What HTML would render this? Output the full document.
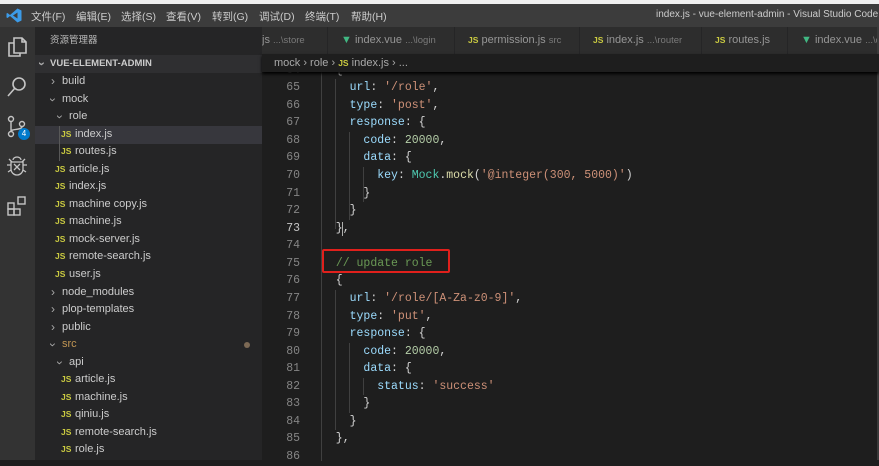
<!DOCTYPE html>
<html><head><meta charset="utf-8"><style>
*{margin:0;padding:0;box-sizing:border-box}
body{width:879px;height:460px;overflow:hidden;background:#1e1e1e;font-family:"Liberation Sans","Noto Sans CJK SC",sans-serif;position:relative}
.abs{position:absolute}
#top{left:0;top:0;width:879px;height:4px;background:#f0f0f0}
#title{left:0;top:4px;width:879px;height:23px;background:#3c3c3c;color:#cccccc;font-size:10.5px}
#title span{position:absolute;top:5px;white-space:nowrap}
#act{left:0;top:27px;width:35px;height:433px;background:#333333}
#side{left:35px;top:27px;width:227px;height:433px;background:#252526;color:#cccccc;font-size:11px}
.row{position:absolute;left:0;width:227px;height:17.5px;line-height:17.5px;white-space:nowrap}
.js{color:#cbcb41;font-weight:bold;font-size:8.5px;position:absolute}
.ch{position:absolute;color:#aaa;font-size:12px}
.dn{display:inline-block;transform:rotate(90deg)}
#tabs{left:262px;top:27px;width:617px;height:27px;background:#252526;font-size:11px;color:#969696}
.tab{position:absolute;top:0;height:27px;line-height:27px;background:#2d2d2d;border-right:1px solid #252526;white-space:nowrap;overflow:hidden}
.tab small{font-size:9.5px;color:#7a7a7a}
#bc{left:262px;top:54px;width:617px;height:18px;background:#1e1e1e;color:#a9a9a9;font-size:11px;line-height:18px;box-shadow:0 2px 3px #000;z-index:3}
.ln{position:absolute;left:262px;width:38px;text-align:right;color:#858585;font-family:"Liberation Mono",monospace;font-size:11.5px;line-height:17.57px}
.cd{position:absolute;left:322px;white-space:pre;color:#d4d4d4;font-family:"Liberation Mono",monospace;font-size:11.5px;line-height:17.57px}
.k{color:#9cdcfe}.s{color:#ce9178}.n{color:#b5cea8}.c{color:#6a9955}.t{color:#4ec9b0}.f{color:#dcdcaa}
.g{position:absolute;width:1px;background:#404040}
#code{position:absolute;left:0;top:1px;width:879px;height:460px}
</style></head><body>
<div class="abs" id="top"></div>
<div class="abs" id="title">
<svg class="abs" style="left:6px;top:4px" width="16" height="15" viewBox="0 0 16 15"><path d="M11.5 0.5L15.5 2.5V12.5L11.5 14.5L4 8L1.5 10L0.5 9.5V5.5L1.5 5L4 7L11.5 0.5ZM11.5 4.5L7 7.5L11.5 10.5Z" fill="#3c9be8" fill-rule="evenodd"/></svg>
<span style="left:31px">文件(F)</span><span style="left:76px">编辑(E)</span><span style="left:121px">选择(S)</span><span style="left:166px">查看(V)</span><span style="left:212px">转到(G)</span><span style="left:259px">调试(D)</span><span style="left:305px">终端(T)</span><span style="left:351px">帮助(H)</span>
<span style="left:656px;font-size:10px">index.js - vue-element-admin - Visual Studio Code</span>
</div>
<div class="abs" id="act">
<svg class="abs" style="left:6px;top:8px" width="22" height="24" viewBox="0 0 22 24" fill="none" stroke="#c5c5c5" stroke-width="1.6"><path d="M8 3h8l4 4v11H8z M16 3v4h4"/><path d="M8 8H3v13h11v-3"/></svg>
<svg class="abs" style="left:6px;top:49px" width="22" height="22" viewBox="0 0 22 22" fill="none" stroke="#c5c5c5" stroke-width="1.6"><circle cx="13" cy="8" r="6"/><path d="M9 12L2 20"/></svg>
<svg class="abs" style="left:6px;top:88px" width="24" height="24" viewBox="0 0 24 24" fill="none" stroke="#c5c5c5" stroke-width="1.4"><circle cx="5" cy="4" r="2.5"/><circle cx="5" cy="19" r="2.5"/><circle cx="16" cy="9" r="2.5"/><path d="M5 6.5v10M16 11.5c0 4-11 2-11 5"/></svg>
<div class="abs" style="left:18px;top:101px;width:12px;height:12px;border-radius:6px;background:#007acc;color:#fff;font-size:8px;text-align:center;line-height:12px">4</div>
<svg class="abs" style="left:6px;top:128px" width="22" height="22" viewBox="0 0 22 22" fill="none" stroke="#c5c5c5" stroke-width="1.3"><path d="M7 5a4 3 0 0 1 8 0"/><path d="M5 7h12v7a6 6 0 0 1-12 0z"/><path d="M8 9l6 6M14 9l-6 6M1 10h4M17 10h4M2 17l3-2M20 17l-3-2M3 4l3 3M19 4l-3 3"/></svg>
<svg class="abs" style="left:6px;top:168px" width="22" height="22" viewBox="0 0 22 22" fill="none" stroke="#c5c5c5" stroke-width="1.4"><rect x="2" y="8" width="6" height="6"/><rect x="2" y="14" width="6" height="6"/><rect x="8" y="14" width="6" height="6"/><rect x="12" y="2" width="7" height="7"/></svg>
</div>
<div class="abs" id="side">
<div class="row" style="top:5px;left:15px;font-size:9.5px;color:#bbbbbb">资源管理器</div>
<div class="row" style="top:28px;background:#2f2f31;font-weight:bold;font-size:9.5px"><span class="ch" style="left:4px"><span class="dn">›</span></span><span style="position:absolute;left:15px">VUE-ELEMENT-ADMIN</span></div>
<div class="row" style="top:46px"><span class="ch" style="left:16px">›</span><span style="position:absolute;left:27px">build</span></div>
<div class="row" style="top:64px"><span class="ch" style="left:15px"><span class="dn">›</span></span><span style="position:absolute;left:27px">mock</span></div>
<div class="row" style="top:81px"><span class="ch" style="left:22px"><span class="dn">›</span></span><span style="position:absolute;left:34px">role</span></div>
<div class="row" style="top:99px;background:#37373d"><span class="js" style="left:26px">JS</span><span style="position:absolute;left:40px">index.js</span></div>
<div class="row" style="top:116px"><span class="js" style="left:26px">JS</span><span style="position:absolute;left:40px">routes.js</span></div>
<div style="position:absolute;left:24px;top:99px;width:1px;height:35px;background:#585858"></div>
<div class="row" style="top:134px"><span class="js" style="left:20px">JS</span><span style="position:absolute;left:34px">article.js</span></div>
<div class="row" style="top:151px"><span class="js" style="left:20px">JS</span><span style="position:absolute;left:34px">index.js</span></div>
<div class="row" style="top:169px"><span class="js" style="left:20px">JS</span><span style="position:absolute;left:34px">machine copy.js</span></div>
<div class="row" style="top:186px"><span class="js" style="left:20px">JS</span><span style="position:absolute;left:34px">machine.js</span></div>
<div class="row" style="top:204px"><span class="js" style="left:20px">JS</span><span style="position:absolute;left:34px">mock-server.js</span></div>
<div class="row" style="top:221px"><span class="js" style="left:20px">JS</span><span style="position:absolute;left:34px">remote-search.js</span></div>
<div class="row" style="top:239px"><span class="js" style="left:20px">JS</span><span style="position:absolute;left:34px">user.js</span></div>
<div class="row" style="top:257px"><span class="ch" style="left:16px">›</span><span style="position:absolute;left:27px">node_modules</span></div>
<div class="row" style="top:274px"><span class="ch" style="left:16px">›</span><span style="position:absolute;left:27px">plop-templates</span></div>
<div class="row" style="top:292px"><span class="ch" style="left:16px">›</span><span style="position:absolute;left:27px">public</span></div>
<div class="row" style="top:309px"><span class="ch" style="left:15px"><span class="dn">›</span></span><span style="position:absolute;left:27px;color:#c09553">src</span><span style="position:absolute;left:209px;top:6px;width:6px;height:6px;border-radius:3px;background:#7d6a55"></span></div>
<div class="row" style="top:327px"><span class="ch" style="left:22px"><span class="dn">›</span></span><span style="position:absolute;left:34px">api</span></div>
<div class="row" style="top:344px"><span class="js" style="left:26px">JS</span><span style="position:absolute;left:40px">article.js</span></div>
<div class="row" style="top:362px"><span class="js" style="left:26px">JS</span><span style="position:absolute;left:40px">machine.js</span></div>
<div class="row" style="top:379px"><span class="js" style="left:26px">JS</span><span style="position:absolute;left:40px">qiniu.js</span></div>
<div class="row" style="top:397px"><span class="js" style="left:26px">JS</span><span style="position:absolute;left:40px">remote-search.js</span></div>
<div class="row" style="top:414px"><span class="js" style="left:26px">JS</span><span style="position:absolute;left:40px">role.js</span></div>
</div>
<div class="abs" id="tabs">
<div class="tab" style="left:0;width:66px;padding-left:0">js <small>...\store</small></div>
<div class="tab" style="left:66px;width:127px;padding-left:13px"><span style="color:#41b883">▼</span> index.vue <small>...\login</small></div>
<div class="tab" style="left:193px;width:125px;padding-left:13px"><span class="js" style="position:static">JS</span> permission.js <small>src</small></div>
<div class="tab" style="left:318px;width:122px;padding-left:13px"><span class="js" style="position:static">JS</span> index.js <small>...\router</small></div>
<div class="tab" style="left:440px;width:86px;padding-left:13px"><span class="js" style="position:static">JS</span> routes.js</div>
<div class="tab" style="left:526px;width:91px;padding-left:13px"><span style="color:#41b883">▼</span> index.vue <small>...\d</small></div>
</div>
<div class="abs" id="bc"><span style="position:absolute;left:12px">mock › role › <span class="js" style="position:static">JS</span> index.js › ...</span></div>
<div id="code">
<div class="g" style="left:321px;top:71px;height:389px"></div>
<div class="g" style="left:335px;top:78px;height:150px"></div>
<div class="g" style="left:349px;top:131px;height:88px"></div>
<div class="g" style="left:363px;top:166px;height:35px"></div>
<div class="g" style="left:335px;top:289px;height:140px"></div>
<div class="g" style="left:349px;top:342px;height:70px"></div>
<div class="g" style="left:363px;top:377px;height:17px"></div>
<div class="abs" style="left:342px;top:221px;width:1px;height:14px;background:#aeafad"></div>
<div class="ln" style="top:61px">64</div><div class="cd" style="top:61px">  {</div>
<div class="ln" style="top:78px">65</div><div class="cd" style="top:78px">    <span class="k">url</span>: <span class="s">'/role'</span>,</div>
<div class="ln" style="top:96px">66</div><div class="cd" style="top:96px">    <span class="k">type</span>: <span class="s">'post'</span>,</div>
<div class="ln" style="top:113px">67</div><div class="cd" style="top:113px">    <span class="k">response</span>: {</div>
<div class="ln" style="top:131px">68</div><div class="cd" style="top:131px">      <span class="k">code</span>: <span class="n">20000</span>,</div>
<div class="ln" style="top:148px">69</div><div class="cd" style="top:148px">      <span class="k">data</span>: {</div>
<div class="ln" style="top:166px">70</div><div class="cd" style="top:166px">        <span class="k">key</span>: <span class="t">Mock</span>.<span class="f">mock</span>(<span class="s">'@integer(300, 5000)'</span>)</div>
<div class="ln" style="top:184px">71</div><div class="cd" style="top:184px">      }</div>
<div class="ln" style="top:201px">72</div><div class="cd" style="top:201px">    }</div>
<div class="ln" style="top:219px;color:#c6c6c6">73</div><div class="cd" style="top:219px">  },</div>
<div class="ln" style="top:236px">74</div>
<div class="ln" style="top:254px">75</div><div class="cd" style="top:254px">  <span class="c">// update role</span></div>
<div class="ln" style="top:271px">76</div><div class="cd" style="top:271px">  {</div>
<div class="ln" style="top:289px">77</div><div class="cd" style="top:289px">    <span class="k">url</span>: <span class="s">'/role/[A-Za-z0-9]'</span>,</div>
<div class="ln" style="top:307px">78</div><div class="cd" style="top:307px">    <span class="k">type</span>: <span class="s">'put'</span>,</div>
<div class="ln" style="top:324px">79</div><div class="cd" style="top:324px">    <span class="k">response</span>: {</div>
<div class="ln" style="top:342px">80</div><div class="cd" style="top:342px">      <span class="k">code</span>: <span class="n">20000</span>,</div>
<div class="ln" style="top:359px">81</div><div class="cd" style="top:359px">      <span class="k">data</span>: {</div>
<div class="ln" style="top:377px">82</div><div class="cd" style="top:377px">        <span class="k">status</span>: <span class="s">'success'</span></div>
<div class="ln" style="top:394px">83</div><div class="cd" style="top:394px">      }</div>
<div class="ln" style="top:412px">84</div><div class="cd" style="top:412px">    }</div>
<div class="ln" style="top:429px">85</div><div class="cd" style="top:429px">  },</div>
<div class="ln" style="top:447px">86</div>
<div class="abs" style="left:322px;top:248px;width:128px;height:24px;border:2px solid #e0201c;border-radius:2px"></div>
</div>
<div class="abs" style="left:877px;top:27px;width:2px;height:433px;background:#3a3a3a"></div>
</body></html>
